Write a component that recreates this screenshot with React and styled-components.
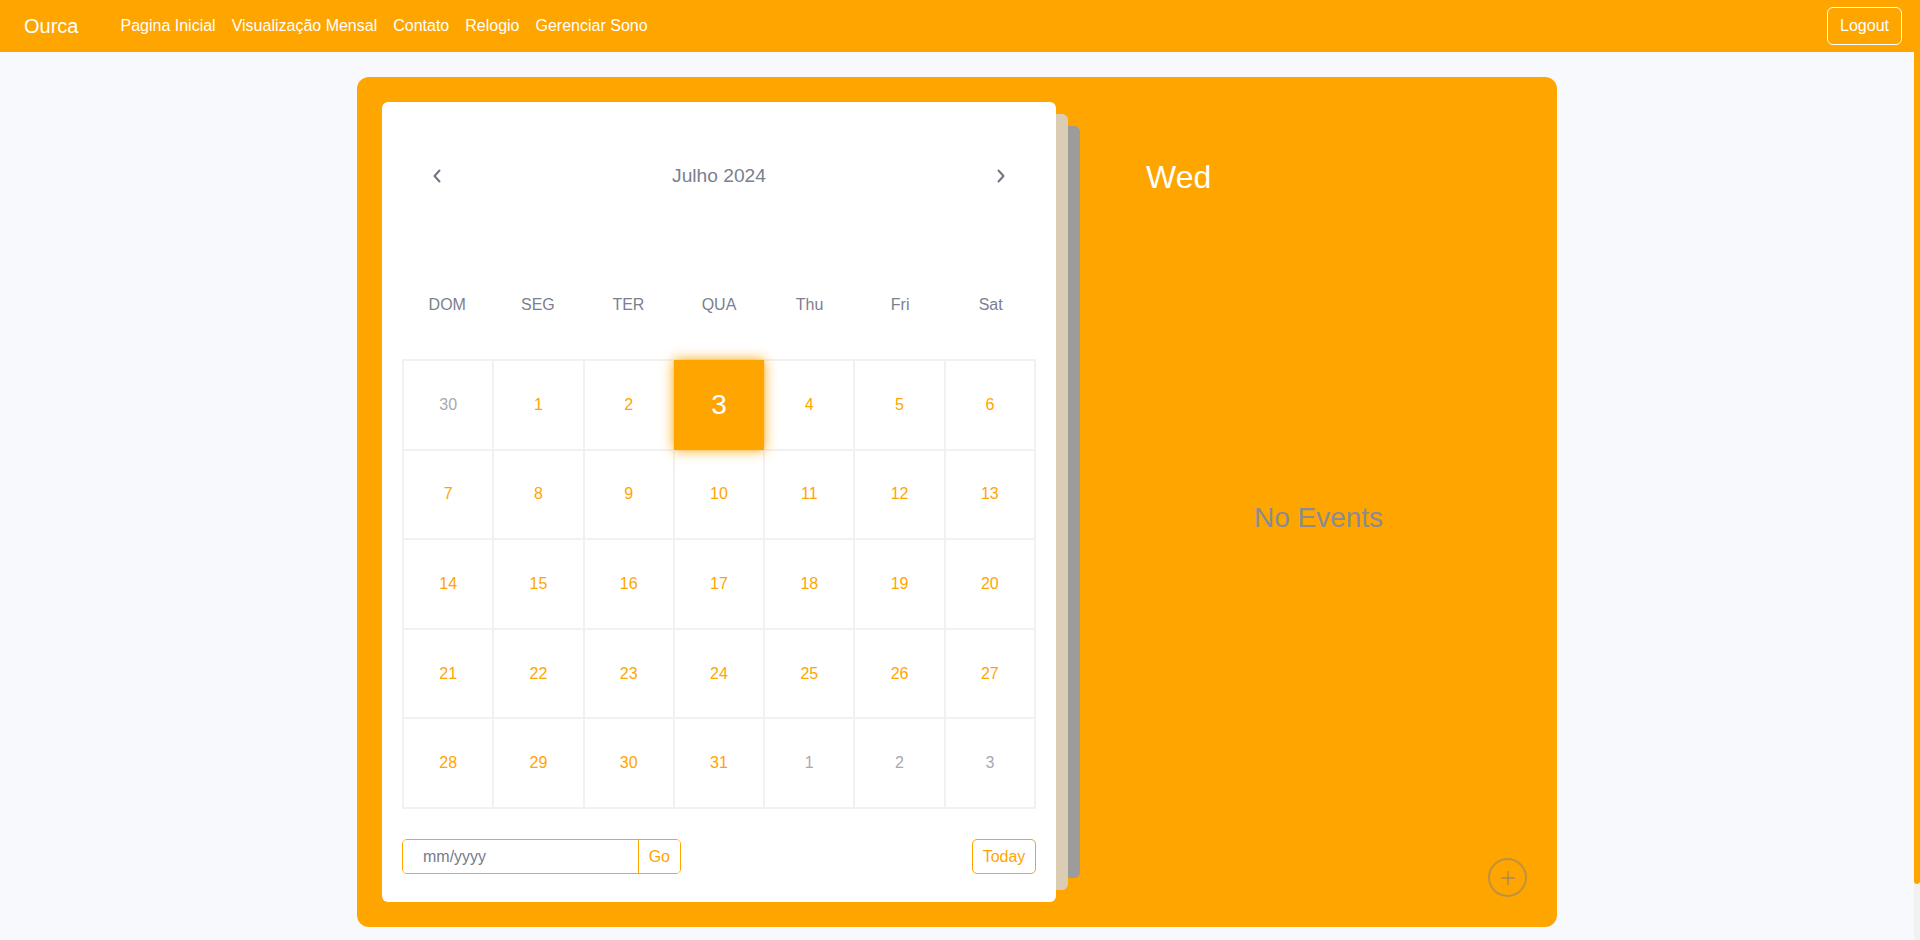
import React from 'react';
import styled, { createGlobalStyle } from 'styled-components';

const ORANGE = '#ffa500';

const GlobalStyle = createGlobalStyle`
  ::-webkit-scrollbar {
    display: none;
  }
  body {
    margin: 0;
    padding-right: 6px;
    background: #f8f9fc;
    font-family: "Liberation Sans", Arial, sans-serif;
  }
  * {
    box-sizing: border-box;
  }
`;

/* the page's slim scrollbar, drawn over the right edge */
const ScrollTrack = styled.div`
  position: fixed;
  top: 0;
  right: 0;
  bottom: 0;
  width: 6px;
  background: #f1f1f1;
  z-index: 10;
`;

const ScrollThumb = styled.div`
  height: 884px;
  background: ${ORANGE};
  border-radius: 0 0 3px 3px;
`;

const Navbar = styled.nav`
  height: 52px;
  background: ${ORANGE};
  display: flex;
  align-items: center;
  padding: 0 12px;
`;

const Brand = styled.span`
  color: #fff;
  font-size: 20px;
  margin-left: 12px;
  margin-right: 34px;
`;

const NavLinks = styled.div`
  display: flex;
  flex: 1;
`;

const NavLink = styled.a`
  color: #fff;
  font-size: 16px;
  padding: 8px;
  text-decoration: none;
`;

const LogoutButton = styled.button`
  font-family: inherit;
  font-size: 16px;
  line-height: 24px;
  color: #fff;
  background: transparent;
  border: 1px solid #fff;
  border-radius: 6px;
  padding: 6px 12px;
`;

const Main = styled.main`
  padding: 25px 0 73px;
`;

const Card = styled.section`
  width: 1200px;
  height: 850px;
  margin: 0 auto;
  background: ${ORANGE};
  border-radius: 12px;
  padding: 25px 0 25px 25px;
  display: flex;
`;

const Stack = styled.div`
  position: relative;
  width: 698px;
  height: 800px;
  flex-shrink: 0;

  &::before,
  &::after {
    content: '';
    position: absolute;
    left: 0;
    width: 674px;
    border-radius: 6px;
  }
  &::after {
    top: 24px;
    bottom: 24px;
    transform: translateX(24px);
    background: #9c9c9c;
  }
  &::before {
    top: 12px;
    bottom: 12px;
    transform: translateX(12px);
    background: #dbcdb4;
    z-index: 1;
  }
`;

const Page = styled.div`
  position: relative;
  z-index: 2;
  width: 674px;
  height: 800px;
  background: #fff;
  border-radius: 6px;
  padding: 20px;
  display: flex;
  flex-direction: column;
`;

const MonthHeader = styled.div`
  height: 108px;
  display: flex;
  align-items: center;
  justify-content: space-between;
  padding: 0 30px;
`;

const ArrowButton = styled.button`
  background: none;
  border: none;
  padding: 0;
  display: flex;
  color: #6f7585;
`;

const MonthTitle = styled.span`
  font-size: 19.2px;
  color: #7b7f8f;
`;

const WeekRow = styled.div`
  display: grid;
  grid-template-columns: repeat(7, 1fr);
  height: 40px;
  margin-top: 55px;
  align-items: center;
`;

const WeekDay = styled.span`
  text-align: center;
  font-size: 16px;
  color: #7b7f8f;
`;

const DaysGrid = styled.div`
  margin-top: 34px;
  height: 450px;
  display: grid;
  grid-template-columns: repeat(7, 1fr);
  grid-template-rows: repeat(5, 1fr);
  border: 1px solid #f1f1f1;
`;

const DayCell = styled.div`
  display: flex;
  align-items: center;
  justify-content: center;
  border: 1px solid ${p => (p.$today ? ORANGE : '#f1f1f1')};
  font-size: ${p => (p.$today ? '28px' : '16px')};
  color: ${p => (p.$today ? '#fff' : p.$muted ? '#a9a9b0' : ORANGE)};
  background: ${p => (p.$today ? ORANGE : '#fff')};
  box-shadow: ${p => (p.$today ? `0 0 12px ${ORANGE}` : 'none')};
  position: relative;
  z-index: ${p => (p.$today ? 1 : 0)};
`;

const Controls = styled.div`
  margin-top: 30px;
  display: flex;
  justify-content: space-between;
  align-items: center;
`;

const InputGroup = styled.div`
  display: flex;
  width: 279px;
  height: 35px;
  border: 1px solid ${ORANGE};
  border-radius: 5px;
  overflow: hidden;
`;

const MonthInput = styled.input`
  flex: 1;
  min-width: 0;
  border: none;
  outline: none;
  padding: 0 0 0 20px;
  font-family: inherit;
  font-size: 16px;
  &::placeholder {
    color: #767b8a;
  }
`;

const SmallButton = styled.button`
  font-family: inherit;
  font-size: 16px;
  color: ${ORANGE};
  background: #fff;
  border: none;
  border-left: 1px solid ${ORANGE};
  padding: 0 10px;
`;

const TodayButton = styled.button`
  font-family: inherit;
  font-size: 16px;
  color: ${ORANGE};
  background: #fff;
  border: 1px solid ${ORANGE};
  border-radius: 5px;
  height: 35px;
  width: 64px;
  padding: 0;
`;

const Side = styled.div`
  flex: 1;
  display: flex;
  flex-direction: column;
  padding-top: 57px;
`;

const DayName = styled.h2`
  margin: 0 0 0 66px;
  font-weight: normal;
  font-size: 32px;
  color: #fff;
`;

const Events = styled.div`
  flex: 1;
  display: flex;
  align-items: center;
  justify-content: center;
  padding: 0 0 19px 0;
  font-size: 28px;
  color: #8a8b96;
`;

const SideFooter = styled.div`
  display: flex;
  justify-content: flex-end;
  padding: 0 30px 5px 0;
`;

const AddButton = styled.button`
  width: 39px;
  height: 39px;
  border-radius: 50%;
  border: 2px solid rgba(128, 128, 128, 0.5);
  background: transparent;
  display: flex;
  align-items: center;
  justify-content: center;
  padding: 0;
  color: rgba(128, 128, 128, 0.5);
`;

const weekDays = ['DOM', 'SEG', 'TER', 'QUA', 'Thu', 'Fri', 'Sat'];

const days = [
  { d: 30, muted: true },
  ...Array.from({ length: 31 }, (_, i) => ({ d: i + 1 })),
  { d: 1, muted: true },
  { d: 2, muted: true },
  { d: 3, muted: true },
];

const Chevron = ({ dir }) => (
  <svg width="10" height="14" viewBox="0 0 10 14" fill="none" stroke="currentColor" strokeWidth="2" strokeLinecap="round" strokeLinejoin="round">
    {dir === 'left' ? <polyline points="7.5,1.5 2.5,7 7.5,12.5" /> : <polyline points="2.5,1.5 7.5,7 2.5,12.5" />}
  </svg>
);

const App = () => {
  return (
    <>
      <GlobalStyle />
      <ScrollTrack>
        <ScrollThumb />
      </ScrollTrack>
      <Navbar>
        <Brand>Ourca</Brand>
        <NavLinks>
          <NavLink>Pagina Inicial</NavLink>
          <NavLink>Visualização Mensal</NavLink>
          <NavLink>Contato</NavLink>
          <NavLink>Relogio</NavLink>
          <NavLink>Gerenciar Sono</NavLink>
        </NavLinks>
        <LogoutButton>Logout</LogoutButton>
      </Navbar>

      <Main>
        <Card>
          <Stack>
            <Page>
              <MonthHeader>
                <ArrowButton><Chevron dir="left" /></ArrowButton>
                <MonthTitle>Julho 2024</MonthTitle>
                <ArrowButton><Chevron dir="right" /></ArrowButton>
              </MonthHeader>

              <WeekRow>
                {weekDays.map(w => (
                  <WeekDay key={w}>{w}</WeekDay>
                ))}
              </WeekRow>

              <DaysGrid>
                {days.map((day, i) => (
                  <DayCell key={i} $muted={day.muted} $today={!day.muted && day.d === 3}>
                    {day.d}
                  </DayCell>
                ))}
              </DaysGrid>

              <Controls>
                <InputGroup>
                  <MonthInput placeholder="mm/yyyy" />
                  <SmallButton>Go</SmallButton>
                </InputGroup>
                <TodayButton>Today</TodayButton>
              </Controls>
            </Page>
          </Stack>

          <Side>
            <DayName>Wed</DayName>
            <Events>No Events</Events>
            <SideFooter>
              <AddButton>
                <svg width="16" height="16" viewBox="0 0 16 16" stroke="currentColor" strokeWidth="2">
                  <line x1="8" y1="1" x2="8" y2="15" />
                  <line x1="1" y1="8" x2="15" y2="8" />
                </svg>
              </AddButton>
            </SideFooter>
          </Side>
        </Card>
      </Main>
    </>
  );
};

export default App;
